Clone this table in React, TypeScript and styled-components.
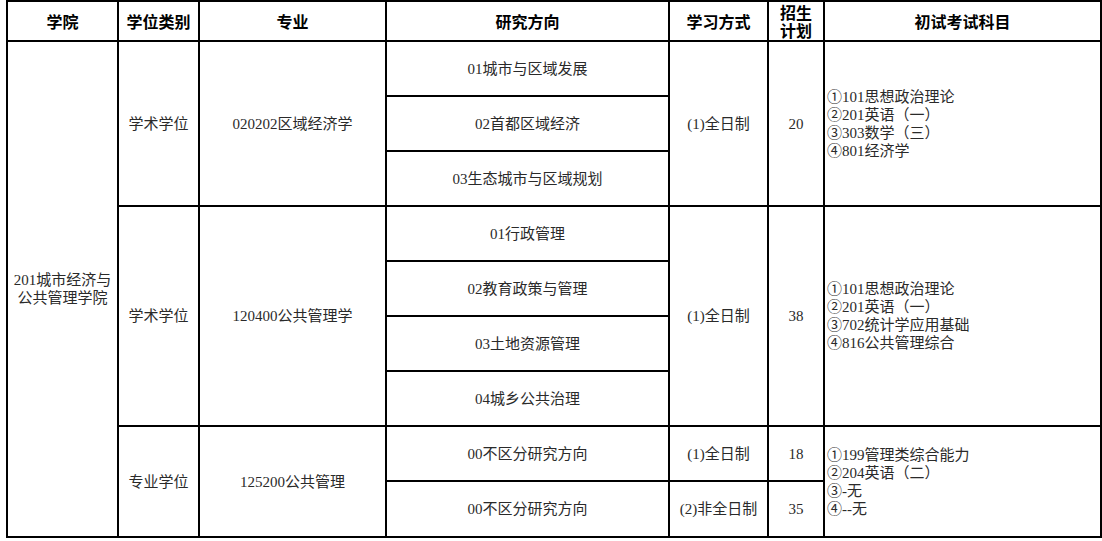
import React from "react";
import styled, { createGlobalStyle } from "styled-components";

const GlobalStyle = createGlobalStyle`
  html, body {
    margin: 0;
    padding: 0;
    background: #ffffff;
  }
`;

const Page = styled.div`
  padding: 0 0 0 6px;
`;

const Table = styled.table`
  border-collapse: collapse;
  table-layout: fixed;
  width: 1094px;
  font-family: "Liberation Serif", "Noto Sans CJK SC", serif;
  font-size: 15px;
  color: #2a2a2a;
`;

const HeadCell = styled.th`
  border: 2px solid #000;
  height: 38px;
  padding: 0;
  font-family: "Noto Sans CJK SC", sans-serif;
  font-weight: 700;
  font-size: 16px;
  line-height: 18px;
  color: #000;
  text-align: center;
  vertical-align: middle;
`;

const NarrowHead = styled(HeadCell)`
  padding: 0 9px;
`;

const Cell = styled.td<{ $align?: "left" | "center"; $tall?: boolean }>`
  border: 2px solid #000;
  height: ${(p) => (p.$tall ? "54px" : "53px")};
  padding: 0 ${(p) => (p.$align === "left" ? "2px" : "0")};
  text-align: ${(p) => p.$align || "center"};
  vertical-align: middle;
  line-height: 18px;
  white-space: nowrap;
`;

const CollegeCell = styled(Cell)`
  white-space: normal;
  padding: 0 2px;
`;

const SubjectLine = styled.div`
  line-height: 18px;
`;

interface Group {
  degree: string;
  major: string;
  directions: { name: string; mode?: string; plan?: string }[];
  mode?: string;
  plan?: string;
  subjects: string[];
}

const groups: Group[] = [
  {
    degree: "学术学位",
    major: "020202区域经济学",
    directions: [
      { name: "01城市与区域发展" },
      { name: "02首都区域经济" },
      { name: "03生态城市与区域规划" },
    ],
    mode: "(1)全日制",
    plan: "20",
    subjects: ["①101思想政治理论", "②201英语（一）", "③303数学（三）", "④801经济学"],
  },
  {
    degree: "学术学位",
    major: "120400公共管理学",
    directions: [
      { name: "01行政管理" },
      { name: "02教育政策与管理" },
      { name: "03土地资源管理" },
      { name: "04城乡公共治理" },
    ],
    mode: "(1)全日制",
    plan: "38",
    subjects: ["①101思想政治理论", "②201英语（一）", "③702统计学应用基础", "④816公共管理综合"],
  },
  {
    degree: "专业学位",
    major: "125200公共管理",
    directions: [
      { name: "00不区分研究方向", mode: "(1)全日制", plan: "18" },
      { name: "00不区分研究方向", mode: "(2)非全日制", plan: "35" },
    ],
    subjects: ["①199管理类综合能力", "②204英语（二）", "③-无", "④--无"],
  },
];

const totalRows = groups.reduce((n, g) => n + g.directions.length, 0);

export default function App() {
  return (
    <Page>
      <GlobalStyle />
      <Table>
        <colgroup>
          <col style={{ width: 111 }} />
          <col style={{ width: 81 }} />
          <col style={{ width: 187 }} />
          <col style={{ width: 283 }} />
          <col style={{ width: 99 }} />
          <col style={{ width: 56 }} />
          <col style={{ width: 277 }} />
        </colgroup>
        <thead>
          <tr>
            <HeadCell>学院</HeadCell>
            <HeadCell>学位类别</HeadCell>
            <HeadCell>专业</HeadCell>
            <HeadCell>研究方向</HeadCell>
            <HeadCell>学习方式</HeadCell>
            <NarrowHead>招生计划</NarrowHead>
            <HeadCell>初试考试科目</HeadCell>
          </tr>
        </thead>
        <tbody>
          {groups.map((g, gi) =>
            g.directions.map((d, di) => {
              const span = g.directions.length;
              const shared = g.mode !== undefined;
              const tall = gi === groups.length - 1 && di === span - 1;
              return (
                <tr key={`${gi}-${di}`}>
                  {gi === 0 && di === 0 ? (
                    <CollegeCell rowSpan={totalRows}>201城市经济与公共管理学院</CollegeCell>
                  ) : null}
                  {di === 0 ? <Cell rowSpan={span}>{g.degree}</Cell> : null}
                  {di === 0 ? <Cell rowSpan={span}>{g.major}</Cell> : null}
                  <Cell $tall={tall}>{d.name}</Cell>
                  {shared ? (
                    di === 0 ? <Cell rowSpan={span}>{g.mode}</Cell> : null
                  ) : (
                    <Cell $tall={tall}>{d.mode}</Cell>
                  )}
                  {shared ? (
                    di === 0 ? <Cell rowSpan={span}>{g.plan}</Cell> : null
                  ) : (
                    <Cell $tall={tall}>{d.plan}</Cell>
                  )}
                  {di === 0 ? (
                    <Cell rowSpan={span} $align="left">
                      {g.subjects.map((s) => (
                        <SubjectLine key={s}>{s}</SubjectLine>
                      ))}
                    </Cell>
                  ) : null}
                </tr>
              );
            })
          )}
        </tbody>
      </Table>
    </Page>
  );
}
